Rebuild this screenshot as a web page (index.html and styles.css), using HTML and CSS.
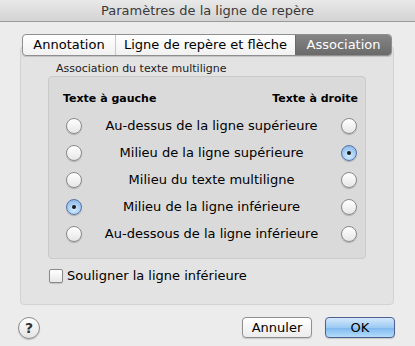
FILE: index.html
```html
<!DOCTYPE html>
<html lang="fr">
<head>
    <meta charset="UTF-8">
    <title>Paramètres de la ligne de repère</title>
    <link rel="stylesheet" href="styles.css">
</head>
<body>
    <div class="window">
        <div class="titlebar">Paramètres de la ligne de repère</div>

        <div class="tabview">
            <div class="tabs">
                <div class="tab">Annotation</div>
                <div class="tab">Ligne de repère et flèche</div>
                <div class="tab selected">Association</div>
            </div>
            <div class="tabbox">
                <div class="group-label">Association du texte multiligne</div>
                <div class="group">
                    <div class="row head">
                        <span>Texte à gauche</span>
                        <span>Texte à droite</span>
                    </div>
                    <div class="row">
                        <span class="radio"></span>
                        <span class="label">Au-dessus de la ligne supérieure</span>
                        <span class="radio"></span>
                    </div>
                    <div class="row">
                        <span class="radio"></span>
                        <span class="label">Milieu de la ligne supérieure</span>
                        <span class="radio on"></span>
                    </div>
                    <div class="row">
                        <span class="radio"></span>
                        <span class="label">Milieu du texte multiligne</span>
                        <span class="radio"></span>
                    </div>
                    <div class="row">
                        <span class="radio on"></span>
                        <span class="label">Milieu de la ligne inférieure</span>
                        <span class="radio"></span>
                    </div>
                    <div class="row">
                        <span class="radio"></span>
                        <span class="label">Au-dessous de la ligne inférieure</span>
                        <span class="radio"></span>
                    </div>
                </div>
                <div class="check-row">
                    <span class="checkbox"></span>
                    <span>Souligner la ligne inférieure</span>
                </div>
            </div>
        </div>

        <div class="footer">
            <div class="help">?</div>
            <div class="buttons">
                <div class="button">Annuler</div>
                <div class="button default">OK</div>
            </div>
        </div>
    </div>
</body>
</html>
```

FILE: styles.css
```css
body { margin: 0; background: #ececec; font-family: 'DejaVu Sans', sans-serif; font-size: 12px; color: #000; }
.window { width: 415px; height: 346px; background: #ececec; border-radius: 0 0 5px 5px; overflow: hidden; }
.titlebar { height: 21px; line-height: 22px; text-align: center; font-size: 13px; color: #3a3a3a; background: linear-gradient(#e9e9e9, #d3d3d3); border-bottom: 1px solid #9a9a9a; }

.tabview { padding: 12px 21px 0 20px; }
.tabs { display: flex; margin: 0 2px -10px 2px; height: 20px; border: 1px solid #8f8f8f; border-radius: 4px; background: linear-gradient(#ffffff, #f1f1f1); position: relative; box-shadow: 0 1px 1px rgba(0,0,0,0.15); overflow: hidden; }
.tab { line-height: 20px; font-size: 13px; text-align: center; border-left: 1px solid #c8c8c8; }
.tab:first-child { border-left: none; width: 92px; }
.tab:nth-child(2) { width: 179px; }
.tab.selected { flex: 1; border-left: 1px solid #6a6a6a; color: #fff; background: linear-gradient(#858585, #6a6a6a); }
.tabbox { height: 246px; padding-top: 15px; box-sizing: content-box; height: 242px; border: 1px solid #d2d2d2; border-radius: 4px; background: #e3e3e3; }

.group-label { margin-left: 35px; font-size: 11px; line-height: 14px; color: #222; }
.group { margin: 0 27px; border: 1px solid #cacaca; border-radius: 4px; background: #dadada; padding-top: 10px; box-sizing: border-box; height: 183px; }
.row { display: flex; align-items: center; justify-content: space-between; height: 27px; padding: 0 8px 0 17px; }
.row.head { height: 22px; padding: 0 7px 0 14px; font-weight: bold; font-size: 11px; margin-bottom: 3px; }
.label { flex: 1; text-align: center; font-size: 13px; }
.radio { width: 14px; height: 14px; border-radius: 50%; border: 1px solid #8a8a8a; background: linear-gradient(#ffffff, #e6e6e6); box-shadow: 0 1px 1px rgba(0,0,0,0.2); display: inline-flex; align-items: center; justify-content: center; }
.radio.on { border-color: #5a74a8; background: radial-gradient(circle at 50% 70%, #d2ebff, #9ec8f0 60%, #7aa9e0); }
.radio.on::after { content: ''; width: 4px; height: 4px; border-radius: 50%; background: #1a1a1a; }

.check-row { display: flex; align-items: center; gap: 4px; margin: 9px 0 0 28px; font-size: 13px; }
.checkbox { width: 12px; height: 12px; border: 1px solid #8a8a8a; border-radius: 2px; background: linear-gradient(#ffffff, #e8e8e8); box-shadow: 0 1px 1px rgba(0,0,0,0.15); }

.footer { display: flex; align-items: center; justify-content: space-between; padding: 12px 20px 0 18px; }
.help { width: 20px; height: 20px; border-radius: 50%; border: 1px solid #8c8c8c; background: linear-gradient(#ffffff, #e4e4e4); box-shadow: 0 1px 1px rgba(0,0,0,0.2); text-align: center; line-height: 20px; font-weight: bold; font-size: 14px; color: #333; }
.buttons { display: flex; gap: 13px; margin-top: -1px; }
.button { width: 68px; height: 19px; line-height: 19px; text-align: center; font-size: 13px; border: 1px solid #8f8f8f; border-radius: 4px; background: linear-gradient(#ffffff, #ececec); box-shadow: 0 1px 1px rgba(0,0,0,0.15); }
.button.default { width: 68px; border-color: #4f5f8f; background: linear-gradient(#d4e8fb, #9ccaf3 50%, #7db7ee 51%, #b3dcfb); }
```
